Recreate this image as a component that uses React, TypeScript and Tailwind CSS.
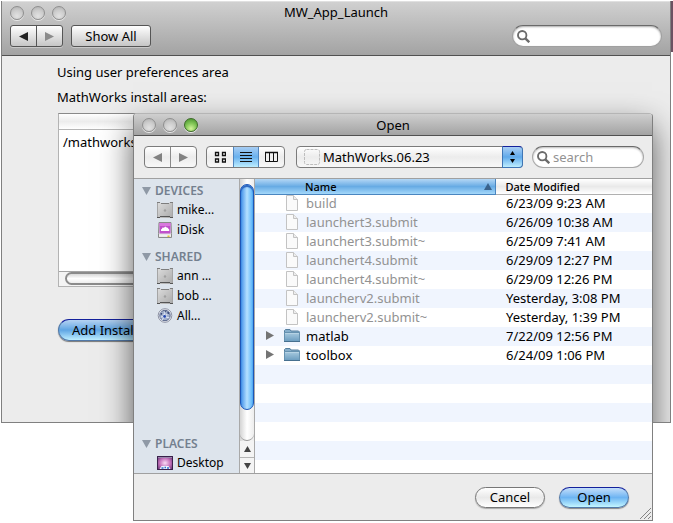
import { useState } from 'react';
import type { ReactNode } from 'react';

interface FileRow {
  name: string;
  modified: string;
  folder?: boolean;
}

const files: FileRow[] = [
  { name: 'build', modified: '6/23/09 9:23 AM' },
  { name: 'launchert3.submit', modified: '6/26/09 10:38 AM' },
  { name: 'launchert3.submit~', modified: '6/25/09 7:41 AM' },
  { name: 'launchert4.submit', modified: '6/29/09 12:27 PM' },
  { name: 'launchert4.submit~', modified: '6/29/09 12:26 PM' },
  { name: 'launcherv2.submit', modified: 'Yesterday, 3:08 PM' },
  { name: 'launcherv2.submit~', modified: 'Yesterday, 1:39 PM' },
  { name: 'matlab', modified: '7/22/09 12:56 PM', folder: true },
  { name: 'toolbox', modified: '6/24/09 1:06 PM', folder: true },
];

// Blank rows keep the stripes going below the last file
const blankRows = [0, 1, 2, 3, 4, 5];

function DiskIcon() {
  return (
    <svg className="w-4 h-4 shrink-0" viewBox="0 0 16 16">
      <defs>
        <linearGradient id="disk" x1="0" y1="0" x2="1" y2="1">
          <stop offset="0" stopColor="#dedede" />
          <stop offset="1" stopColor="#a9a9a9" />
        </linearGradient>
      </defs>
      <path d="M0 0h3l1 1h8l1-1h3v16H0z" fill="url(#disk)" />
      <path d="M0.5 0v15M15.5 0v15" stroke="#a5a5a5" />
      <path d="M0 0.5h3M4 1.5h8M13 0.5h3" stroke="#7d7d7d" />
      <path d="M0 15.5h3M13 15.5h3M3 14.5h10" stroke="#555" />
      <circle cx="8" cy="8.5" r="1.2" fill="#a0a0a0" />
    </svg>
  );
}

function IDiskIcon() {
  return (
    <svg className="w-4 h-4 shrink-0" viewBox="0 0 16 16">
      <path d="M2 0.5h12l0.5 11v4h-13v-4z" fill="#dedede" stroke="#8a8a8a" />
      <path d="M2.500 1h11v10.500h-11z" fill="#c050cb" />
      <path d="M2.500 1h11v3h-11z" fill="#d978de" />
      <path d="M4 9V7.5l1-.7.5-1.3 1.5.2L8.2 4.5l1.5.9 1 .3.9 1.3.6.5V9z" fill="#fff" />
      <path d="M2 12.5h12v2H2z" fill="#f1f1f1" />
      <path d="M10.5 13.5h2v1.5h-2z" fill="#e3c63b" />
    </svg>
  );
}

function NetworkIcon() {
  return (
    <svg className="w-4 h-4 shrink-0" viewBox="0 0 16 16">
      <circle cx="8" cy="7.5" r="6.8" fill="#eef0f5" stroke="#8d92a3" />
      <circle cx="8" cy="7.5" r="5.2" fill="#a3b1cc" stroke="#5a688c" />
      <path d="M4 4.5l4 4L12 4M7.5 8.5L5 12M7.5 8.5l5 1.5M3.5 9l4-.5L8 3" fill="none" stroke="#edf3ff" strokeWidth="0.9" />
      <circle cx="7.6" cy="8.4" r="1.4" fill="#2347b0" />
      <circle cx="11.2" cy="5" r="1" fill="#2b3d70" />
      <circle cx="4.6" cy="5.8" r="0.9" fill="#2b3d70" />
      <circle cx="8.5" cy="3.6" r="0.8" fill="#4d5b80" />
    </svg>
  );
}

function DesktopIcon() {
  return (
    <svg className="w-4 h-4 shrink-0" viewBox="0 0 16 16">
      <defs>
        <radialGradient id="aurora" cx="0.5" cy="0.5" r="0.65">
          <stop offset="0" stopColor="#fbdcf6" />
          <stop offset="0.5" stopColor="#c774bd" />
          <stop offset="1" stopColor="#5a2b68" />
        </radialGradient>
      </defs>
      <path d="M0 1h16v14H0z" fill="url(#aurora)" />
      <path d="M0.5 1.5h15v13H0.5z" fill="none" stroke="#38204a" />
      <path d="M1 2.5h14" stroke="#9a86ab" />
      <path d="M2.5 14l2-3h7l2 3z" fill="#eef2fb" />
      <path d="M4.5 13h2M7.500 12.5h1.500M10 13h2" stroke="#2f6fd0" strokeWidth="1.5" />
    </svg>
  );
}

function FileIcon() {
  return (
    <svg className="w-4 h-4" viewBox="0 0 16 16">
      <path d="M2.5.5h7l4 4v11h-11z" fill="#fafafa" stroke="#c3c3c3" />
      <path d="M9.5.5v4h4" fill="#ededed" stroke="#c3c3c3" />
    </svg>
  );
}

function FolderIcon() {
  return (
    <svg className="w-4 h-4" viewBox="0 0 16 16">
      <defs>
        <linearGradient id="folder" x1="0" y1="0" x2="0" y2="1">
          <stop offset="0" stopColor="#a9cbe0" />
          <stop offset="1" stopColor="#6a9cbf" />
        </linearGradient>
      </defs>
      <path d="M0.5 13v-10.5l1-1h4.5l1 1.5h7.5l1 1v9z" fill="#86aecb" stroke="#557f9e" />
      <path d="M0.5 4.5h15v9h-15z" fill="url(#folder)" stroke="#6692b0" />
      <path d="M0 13.5h16" stroke="#46708f" />
      <path d="M1 5.5h14" stroke="#b5d2e4" />
    </svg>
  );
}

function SearchIcon() {
  return (
    <svg className="w-[13px] h-[13px] shrink-0" viewBox="0 0 12 12" fill="none" stroke="#6b6b6b">
      <circle cx="4.8" cy="4.8" r="3.9" strokeWidth="1.7" />
      <path d="M7.7 7.7l3.6 3.6" strokeWidth="2.2" />
    </svg>
  );
}

function Arrow({ dir, className }: { dir: 'left' | 'right' | 'up' | 'down'; className: string }) {
  const points = {
    left: '8,0 8,8 0,4',
    right: '0,0 0,8 8,4',
    up: '0,8 8,8 4,0',
    down: '0,0 8,0 4,8',
  };
  return (
    <svg className={className} viewBox="0 0 8 8" preserveAspectRatio="none" fill="currentColor">
      <polygon points={points[dir]} />
    </svg>
  );
}

function Light({ label, green }: { label: string; green?: boolean }) {
  return (
    <button
      aria-label={label}
      className={`w-[14px] h-[14px] rounded-full border shadow-[0_1px_0_#e8e8e8] ${
        green
          ? 'border-[#3d6b28] bg-[radial-gradient(circle_at_50%_80%,#d3f59b_0%,#86c95a_45%,#3f8b26_100%)]'
          : 'border-[#8f8f8f] bg-[radial-gradient(circle_at_50%_75%,#e2e2e2_0%,#cdcdcd_50%,#adadad_100%)]'
      }`}
    />
  );
}

function SidebarGroup({ title, children }: { title: string; children: ReactNode }) {
  return (
    <section>
      <h3 className="h-[18px] flex items-center gap-1 pl-2 font-semibold text-[#74808f]">
        <Arrow dir="down" className="w-[9px] h-2 text-[#8f99a6]" />
        {title}
      </h3>
      <ul>{children}</ul>
    </section>
  );
}

function SidebarItem({ icon, label }: { icon: ReactNode; label: string }) {
  return (
    <li>
      <button className="w-full h-5 flex items-center gap-1 pl-[23px]">
        {icon}
        {label}
      </button>
    </li>
  );
}

export default function App() {
  const [query, setQuery] = useState('');
  const [prefQuery, setPrefQuery] = useState('');

  return (
    <div className="relative min-h-screen bg-white font-['Noto_Sans',sans-serif] text-[13px] leading-4 text-black">
      {/* Desktop showing past the window edge */}
      <div className="absolute top-px right-0 w-[3px] h-[51px] bg-[#6b5161]" />

      {/* Preferences window */}
      <div className="pt-px pl-px pr-[2px]">
        <main className="relative overflow-hidden h-[422px] bg-[#ececec] border border-t-0 border-[#808080]">
          <header className="bg-linear-to-b from-[#d0d0d0] to-[#a3a3a3] border-t border-[#e0e0e0] border-b border-b-[#515151]">
            <div className="h-[21px] grid grid-cols-[1fr_auto_1fr] items-center">
              <div className="flex gap-[7px] pl-2">
                <Light label="Close preferences" />
                <Light label="Minimize preferences" />
                <Light label="Zoom preferences" />
              </div>
              <h1 className="pb-[2px]">MW_App_Launch</h1>
            </div>
            <div className="h-8 flex items-start pt-[2px] pl-2 pr-2">
              <div className="flex h-[22px] border border-[#555] rounded-[3px] overflow-hidden bg-linear-to-b from-white to-[#c6c6c6] shadow-[0_1px_0_#c8c8c8]">
                <button aria-label="Back" className="w-[26px] flex items-center justify-center border-r border-[#555] text-[#222]">
                  <Arrow dir="left" className="w-[9px] h-[9px]" />
                </button>
                <button aria-label="Forward" className="w-[25px] flex items-center justify-center text-[#8b8b8b]">
                  <Arrow dir="right" className="w-[9px] h-[9px]" />
                </button>
              </div>
              <button className="ml-2 h-[22px] w-20 border border-[#555] rounded-[3px] bg-linear-to-b from-white to-[#c6c6c6] shadow-[0_1px_0_#c8c8c8]">
                Show All
              </button>
              <label className="ml-auto w-[150px] h-[22px] flex items-center gap-1 px-1 rounded-full bg-white border border-[#a0a0a0] border-t-[#6a6a6a] shadow-[inset_0_1px_2px_#aaa]">
                <SearchIcon />
                <input
                  aria-label="Search preferences"
                  value={prefQuery}
                  onChange={(e) => setPrefQuery(e.target.value)}
                  className="w-full bg-transparent outline-none"
                />
              </label>
            </div>
          </header>

          <div className="px-[55px] pt-2">
            <p>Using user preferences area</p>
            <h2 className="mt-[9px]">MathWorks install areas:</h2>
            <div className="mt-2 ml-px h-[174px] flex flex-col bg-white border border-[#b3b3b3] border-t-[#8a8a8a]">
              <div className="h-4 border-b border-[#b5b5b5] bg-linear-to-b from-white via-[#ececec] to-white" />
              <div className="flex-1 px-1 pt-1">/mathworks</div>
              <div className="h-[15px] pl-[6px] border-t border-[#a5a5a5] bg-[#f4f4f4]">
                <div className="h-[13px] rounded-l-full border-2 border-r-0 border-[#8b8b8b] bg-linear-to-b from-[#d8d8d8] via-white to-[#ededed]" />
              </div>
            </div>
            <button className="mt-8 ml-px h-[22px] px-[13px] rounded-full border border-[#5279a8] border-t-[#14219c] bg-linear-to-b from-[#b5d3f2] via-[#5fa5e3] to-[#bdeeff] shadow-[0_1px_1px_#777]">
              Add Install
            </button>
          </div>

          {/* Shade that the dialog casts on this window */}
          <div className="absolute left-[131px] right-[18px] top-[112px] h-[407px] shadow-[0_14px_30px_rgba(0,0,0,0.64)]" />
        </main>
      </div>

      {/* Open dialog */}
      <div
        role="dialog"
        aria-label="Open"
        className="absolute left-[133px] right-[20px] top-[113px] rounded-t-[4px] overflow-hidden bg-[#ececec] border border-[#808080] border-t-[#b5b5b5]"
      >
        <header className="h-[22px] grid grid-cols-[1fr_auto_1fr] items-center bg-linear-to-b from-[#cfcfcf] to-[#a3a3a3] border-b border-[#515151]">
          <div className="flex gap-[7px] pl-2">
            <Light label="Close" />
            <Light label="Minimize" />
            <Light label="Zoom" green />
          </div>
          <h2>Open</h2>
        </header>

        <div className="h-[42px] flex items-center pl-[10px] pr-2">
          <div className="flex h-[22px] border border-[#7b7b7b] rounded-[4px] overflow-hidden bg-linear-to-b from-white via-[#ececec] to-[#f8f8f8]">
            <button aria-label="Back" className="w-[26px] flex items-center justify-center border-r border-[#8a8a8a] text-[#828282]">
              <Arrow dir="left" className="w-[9px] h-[9px]" />
            </button>
            <button aria-label="Forward" className="w-[25px] flex items-center justify-center text-[#828282]">
              <Arrow dir="right" className="w-[9px] h-[9px]" />
            </button>
          </div>

          <div className="ml-[9px] flex h-[22px] border border-[#7b7b7b] rounded-[4px] overflow-hidden bg-linear-to-b from-white via-[#ececec] to-[#f8f8f8]">
            <button aria-label="Icon view" className="w-[26px] flex items-center justify-center">
              <svg className="w-3 h-3" viewBox="0 0 12 12" fill="none" stroke="#111" strokeWidth="1.3">
                <path d="M1.5 1.5h3v3h-3zM8.5 1.5h3v3h-3zM1.5 8h3v3h-3zM8.5 8h3v3h-3z" />
              </svg>
            </button>
            <button
              aria-label="List view"
              aria-pressed="true"
              className="w-[26px] flex items-center justify-center border-x border-[#4f86c0] bg-linear-to-b from-[#a7cdf3] via-[#69b1ee] to-[#bdeeff]"
            >
              <svg className="w-3 h-3" viewBox="0 0 12 12" stroke="#111">
                <path d="M0 1.5h12M0 4.5h12M0 7.5h12M0 10.5h12" />
              </svg>
            </button>
            <button aria-label="Column view" className="w-[25px] flex items-center justify-center">
              <svg className="w-[13px] h-3" viewBox="0 0 13 12" fill="none" stroke="#111">
                <path d="M0.5 1.5h12v9H0.5zM4.5 1v10M8.5 1v10" />
                <path d="M0 1.5h13" strokeWidth="1.5" />
              </svg>
            </button>
          </div>

          <div className="relative ml-[11px] flex-1">
            <select
              aria-label="Folder"
              className="block w-full h-[22px] pl-[26px] pr-6 appearance-none border border-[#7b7b7b] rounded-[4px] bg-linear-to-b from-white via-[#ececec] to-[#f8f8f8]"
            >
              <option>MathWorks.06.23</option>
            </select>
            <svg className="absolute left-2 top-[3px] w-4 h-4 pointer-events-none" viewBox="0 0 16 16">
              <rect x="0.5" y="0.5" width="15" height="15" rx="2" fill="none" stroke="#bdbdbd" strokeDasharray="3 1" />
            </svg>
            <span className="absolute right-0 top-0 w-[21px] h-[22px] flex flex-col items-center justify-center gap-1 rounded-r-[4px] border border-[#3f76b5] border-t-[#14219c] bg-linear-to-b from-[#a9cef4] via-[#5fa9ea] to-[#bdeeff] pointer-events-none">
              <Arrow dir="up" className="w-[5px] h-1" />
              <Arrow dir="down" className="w-[5px] h-1" />
            </span>
          </div>

          <label className="ml-[9px] w-[112px] h-[22px] flex items-center gap-[3px] px-1 rounded-full bg-white border border-[#a8a8a8] border-t-[#6a6a6a] shadow-[inset_0_1px_2px_#bbb]">
            <SearchIcon />
            <input
              aria-label="Search files"
              placeholder="search"
              value={query}
              onChange={(e) => setQuery(e.target.value)}
              className="w-full min-w-0 bg-transparent outline-none placeholder:text-[#929292]"
            />
          </label>
        </div>

        <div className="h-[296px] flex border-y border-[#a0a0a0]">
          <nav className="w-[105px] shrink-0 flex flex-col bg-[#dde4ec] pt-[3px] overflow-hidden text-[12px]">
            <SidebarGroup title="DEVICES">
              <SidebarItem icon={<DiskIcon />} label="mike..." />
              <SidebarItem icon={<IDiskIcon />} label="iDisk" />
            </SidebarGroup>
            <div className="mt-2">
              <SidebarGroup title="SHARED">
                <SidebarItem icon={<DiskIcon />} label="ann ..." />
                <SidebarItem icon={<DiskIcon />} label="bob ..." />
                <SidebarItem icon={<NetworkIcon />} label="All..." />
              </SidebarGroup>
            </div>
            <div className="mt-auto">
              <SidebarGroup title="PLACES">
                <SidebarItem icon={<DesktopIcon />} label="Desktop" />
              </SidebarGroup>
            </div>
          </nav>

          {/* Sidebar scrollbar */}
          <div className="w-4 shrink-0 flex flex-col border-x border-[#a9a9a9] bg-linear-to-r from-[#d4d4d4] via-white to-[#ededed]">
            <div className="mt-[5px] h-[226px] rounded-full border border-[#1c56b8] bg-linear-to-r from-[#3f8fe8] via-[#b4e0ff] to-[#4fb0f8] shadow-[inset_0_2px_1px_#2a63bd]" />
            <div className="flex-1 rounded-b-full border-b border-[#999]" />
            <button aria-label="Scroll up" className="h-4 flex items-center justify-center bg-[#f4f4f4] text-[#444]">
              <Arrow dir="up" className="w-[7px] h-[6px]" />
            </button>
            <button aria-label="Scroll down" className="h-4 flex items-center justify-center bg-[#f4f4f4] border-t border-[#b5b5b5] text-[#444]">
              <Arrow dir="down" className="w-[7px] h-[6px]" />
            </button>
          </div>

          <div className="flex-1 overflow-hidden bg-white">
            <table className="w-full table-fixed border-collapse text-left">
              <thead className="text-[11px]">
                <tr className="h-[15px] leading-[13px]">
                  <th className="p-0 pl-[50px] font-medium border-b border-r border-[#4a86c0] bg-linear-to-b from-[#b4d7f5] via-[#67abe4] to-[#a4d8fa]">
                    <div className="flex items-center justify-between pr-[3px]">
                      Name
                      <Arrow dir="up" className="w-2 h-[7px] text-[#3a638c]" />
                    </div>
                  </th>
                  <th className="w-[157px] p-0 pl-[10px] font-medium border-b border-[#b0b0b0] bg-linear-to-b from-white via-[#e9e9e9] to-white">
                    Date Modified
                  </th>
                </tr>
              </thead>
              <tbody>
                {files.map((file) => (
                  <tr key={file.name} className="h-[19px] even:bg-[#f0f5fe]">
                    <td className="p-0 pb-[2px]">
                      <div className={`flex items-center pl-[11px] ${file.folder ? '' : 'text-[#929292]'}`}>
                        <span className="w-[18px]">
                          {file.folder && <Arrow dir="right" className="w-2 h-[9px] text-[#747474]" />}
                        </span>
                        {file.folder ? <FolderIcon /> : <FileIcon />}
                        <span className="ml-[6px]">{file.name}</span>
                      </div>
                    </td>
                    <td className="p-0 pb-[2px] pl-[11px] whitespace-nowrap">{file.modified}</td>
                  </tr>
                ))}
                {blankRows.map((row) => (
                  <tr key={row} className="h-[19px] even:bg-[#f0f5fe]">
                    <td colSpan={2} />
                  </tr>
                ))}
              </tbody>
            </table>
          </div>
        </div>

        <footer className="relative h-[46px] flex items-center justify-end gap-[14px] pr-[23px]">
          <button className="w-[70px] h-[21px] pb-px rounded-full border border-[#777] bg-linear-to-b from-white via-[#e9e9e9] to-white shadow-[0_1px_1px_#aaa]">
            Cancel
          </button>
          <button className="w-[70px] h-[21px] pb-px rounded-full border border-[#5279a8] border-t-[#14219c] bg-linear-to-b from-[#c3defa] via-[#6db4f2] to-[#c3f6ff] shadow-[0_1px_1px_#888]">
            Open
          </button>
          <svg className="absolute right-px bottom-px w-[11px] h-[11px]" viewBox="0 0 11 11" stroke="#858585">
            <path d="M0 11L11 0M4 11l7-7M8 11l3-3" />
          </svg>
        </footer>
      </div>
    </div>
  );
}
